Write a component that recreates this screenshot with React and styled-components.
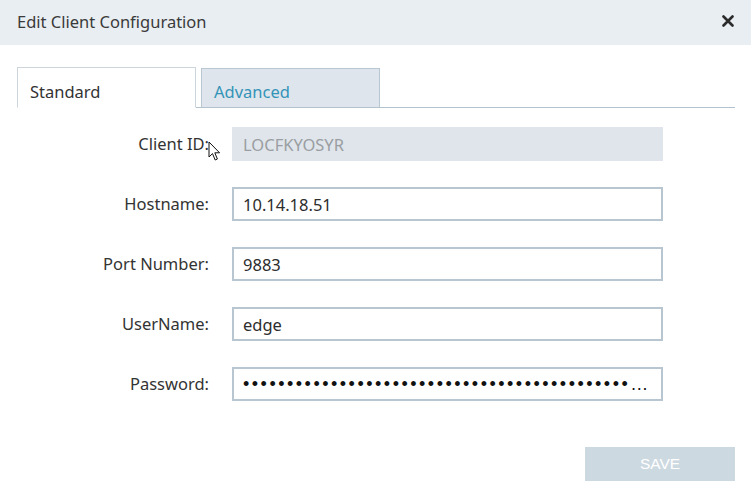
import React from 'react';
import styled, { createGlobalStyle } from 'styled-components';

const GlobalStyle = createGlobalStyle`
  html, body {
    margin: 0;
    padding: 0;
    background: #ffffff;
  }
  body {
    font-family: 'Noto Sans', 'Open Sans', sans-serif;
    color: #333333;
  }
`;

const Dialog = styled.div`
  width: 751px;
  height: 489px;
  display: flex;
  flex-direction: column;
  background: #ffffff;
  overflow: hidden;
`;

const Header = styled.div`
  height: 45px;
  box-sizing: border-box;
  flex: none;
  display: flex;
  align-items: center;
  justify-content: space-between;
  padding: 0 16px 3px 17px;
  background: #e9eef2;
`;

const Title = styled.div`
  font-size: 16.5px;
  color: #3a3a3a;
`;

const CloseButton = styled.button`
  border: none;
  background: transparent;
  padding: 0;
  width: 14px;
  height: 14px;
  display: flex;
  align-items: center;
  justify-content: center;
  cursor: pointer;
`;

const TabBar = styled.div`
  margin: 22px 16px 0 17px;
  height: 40px;
  display: flex;
  align-items: flex-end;
  gap: 5px;
  border-bottom: 1px solid #b4c2cd;
`;

const Tab = styled.div`
  width: ${({ $width }) => $width}px;
  box-sizing: border-box;
  display: flex;
  align-items: flex-end;
  padding: 0 0 4px 12px;
  font-size: 16.5px;
  margin-bottom: -1px;
  border: 1px solid ${({ $active }) => ($active ? '#ccd5dc' : '#b9c7d2')};
  border-bottom: ${({ $active }) => ($active ? '1px solid #ffffff' : '1px solid #b4c2cd')};
  background: ${({ $active }) => ($active ? '#ffffff' : '#dfe5ec')};
  color: ${({ $active }) => ($active ? '#333333' : '#3394b8')};
  height: ${({ $active }) => ($active ? 41 : 40)}px;
`;

const Form = styled.div`
  position: relative;
  margin-top: 19px;
  display: grid;
  grid-template-columns: 209px 431px;
  column-gap: 23px;
  row-gap: 26px;
  align-items: center;
`;

const Label = styled.div`
  text-align: right;
  font-size: 16.5px;
  color: #333333;
  margin-top: -2px;
`;

const Field = styled.div`
  height: 34px;
  box-sizing: border-box;
  display: flex;
  align-items: center;
  padding: 0 9px;
  font-size: 16.5px;
  border: 2px solid ${({ $disabled }) => ($disabled ? '#dfe5eb' : '#b7c6d1')};
  background: ${({ $disabled }) => ($disabled ? '#dfe5eb' : '#ffffff')};
  color: ${({ $disabled }) => ($disabled ? '#9a9ea2' : '#2d2d2d')};
`;

const Dots = styled.span`
  display: block;
  width: 100%;
  white-space: nowrap;
  overflow: hidden;
  text-overflow: ellipsis;
  font-family: 'Liberation Sans', Arial, sans-serif;
  font-size: 18px;
  letter-spacing: 2.5px;
  color: #111111;
`;

const Pointer = styled.svg`
  position: absolute;
  left: 208px;
  top: 14px;
  pointer-events: none;
`;

const Footer = styled.div`
  margin-top: 46px;
  padding-right: 16px;
  display: flex;
  justify-content: flex-end;
`;

const SaveButton = styled.button`
  width: 150px;
  height: 34px;
  border: none;
  background: #cdd9e1;
  color: #ffffff;
  font-family: 'Liberation Sans', Arial, sans-serif;
  font-size: 15.5px;
  cursor: default;
`;

const fields = [
  { label: 'Client ID:', value: 'LOCFKYOSYR', disabled: true },
  { label: 'Hostname:', value: '10.14.18.51' },
  { label: 'Port Number:', value: '9883' },
  { label: 'UserName:', value: 'edge' },
  { label: 'Password:', value: '•'.repeat(60), password: true },
];

const App = () => (
  <>
    <GlobalStyle />
    <Dialog>
      <Header>
        <Title>Edit Client Configuration</Title>
        <CloseButton aria-label="Close">
          <svg width="12" height="12" viewBox="0 0 12 12">
            <path d="M1.5 1.5 L10.5 10.5 M10.5 1.5 L1.5 10.5" stroke="#2b2b2b" strokeWidth="2.6" strokeLinecap="round" />
          </svg>
        </CloseButton>
      </Header>

      <TabBar>
        <Tab $active $width={179}>Standard</Tab>
        <Tab $width={179}>Advanced</Tab>
      </TabBar>

      <Form>
        {fields.map((f) => (
          <React.Fragment key={f.label}>
            <Label>{f.label}</Label>
            <Field $disabled={f.disabled}>
              {f.password ? <Dots>{f.value}</Dots> : f.value}
            </Field>
          </React.Fragment>
        ))}
        <Pointer width="13" height="21" viewBox="0 0 13 21">
          <path d="M1 1 L1 16 L4.5 12.6 L7.2 19 L9.4 18 L6.8 11.8 L11.6 11.8 Z" fill="#ffffff" stroke="#111111" strokeWidth="1" strokeLinejoin="round" />
        </Pointer>
      </Form>

      <Footer>
        <SaveButton>SAVE</SaveButton>
      </Footer>
    </Dialog>
  </>
);

export default App;
